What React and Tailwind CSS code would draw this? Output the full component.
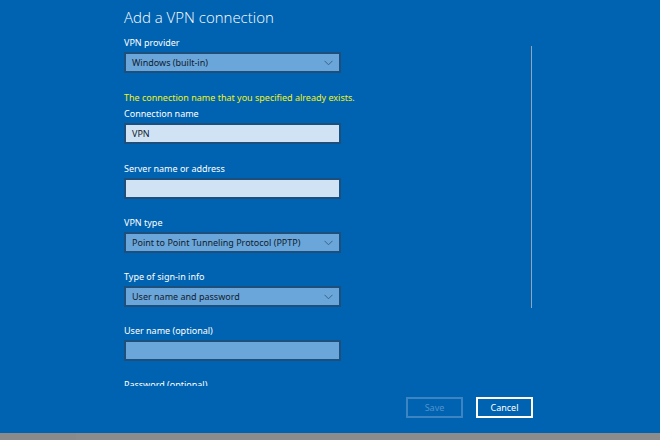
import React from "react";

const font = { fontFamily: '"Noto Sans", "Open Sans", sans-serif' };

const Chevron = () => (
  <svg width="9" height="6" viewBox="0 0 9 6" className="shrink-0">
    <polyline points="0.5,0.8 4.5,4.8 8.5,0.8" fill="none" stroke="#3d6386" strokeWidth="1" />
  </svg>
);

const Label = ({ children }) => (
  <div className="h-[14px] shrink-0 text-[9px] leading-[14px] text-white whitespace-nowrap">{children}</div>
);

const Dropdown = ({ value }) => (
  <div className="mt-[2px] shrink-0 w-[217px] h-[21px] border-2 border-[#1d4f7c] bg-[#6aa6d9] flex items-center justify-between pl-[6px] pr-[6px]">
    <span className="text-[9px] leading-none text-[#12202e] whitespace-nowrap">{value}</span>
    <Chevron />
  </div>
);

const Input = ({ value, dim }) => (
  <div
    className={
      "mt-[2px] shrink-0 w-[217px] h-[21px] border-2 border-[#1d4f7c] flex items-center pl-[6px] " +
      (dim ? "bg-[#6aa6d9]" : "bg-[#cfe3f4]")
    }
  >
    <span className="text-[9px] leading-none text-[#12202e]">{value}</span>
  </div>
);

const Field = ({ label, first, children }) => (
  <div className={(first ? "mt-[18px]" : "mt-[17px]") + " shrink-0"}>
    <Label>{label}</Label>
    {children}
  </div>
);

export default function App() {
  return (
    <div className="w-[660px] h-[440px] flex flex-col overflow-hidden" style={font}>
      <div className="h-[433px] shrink-0 bg-[#0063b1] flex flex-col">
        {/* title */}
        <div
          className="pl-[124px] pt-[5px] h-[36px] shrink-0 text-[15px] leading-[24px] font-light text-white"
          style={{ fontFamily: '"Open Sans", "Noto Sans", sans-serif' }}
        >
          Add a VPN connection
        </div>

        {/* scrolling form */}
        <div className="h-[350px] shrink-0 overflow-hidden flex pl-[124px]">
          <div className="w-[407px] flex flex-col">
            <Label>VPN provider</Label>
            <Dropdown value="Windows (built-in)" />

            <div className="mt-[18px] h-[14px] shrink-0 text-[9px] leading-[14px] text-[#eef21a] whitespace-nowrap">
              The connection name that you specified already exists.
            </div>
            <div className="mt-[2px] shrink-0">
              <Label>Connection name</Label>
              <Input value="VPN" />
            </div>

            <Field label="Server name or address" first>
              <Input value="" />
            </Field>
            <Field label="VPN type">
              <Dropdown value="Point to Point Tunneling Protocol (PPTP)" />
            </Field>
            <Field label="Type of sign-in info">
              <Dropdown value="User name and password" />
            </Field>
            <Field label="User name (optional)">
              <Input value="" dim />
            </Field>
            <Field label="Password (optional)">
              <Input value="" dim />
            </Field>
          </div>
          <div className="w-px mt-[10px] h-[262px] bg-[#93a6b8]" />
        </div>

        {/* buttons */}
        <div className="mt-[11px] flex justify-end gap-[13px] pr-[127px]">
          <div className="w-[57px] h-[21px] border-2 border-[#3d84c3] flex items-center justify-center text-[9px] text-[#5192cc]">
            Save
          </div>
          <div className="w-[57px] h-[21px] border-2 border-white flex items-center justify-center text-[9px] text-white">
            Cancel
          </div>
        </div>
      </div>
      <div className="h-[7px] flex">
        <div className="w-[76px] bg-[#8a8a8a]" />
        <div className="flex-1 bg-[#8c8c8c]" />
      </div>
    </div>
  );
}
